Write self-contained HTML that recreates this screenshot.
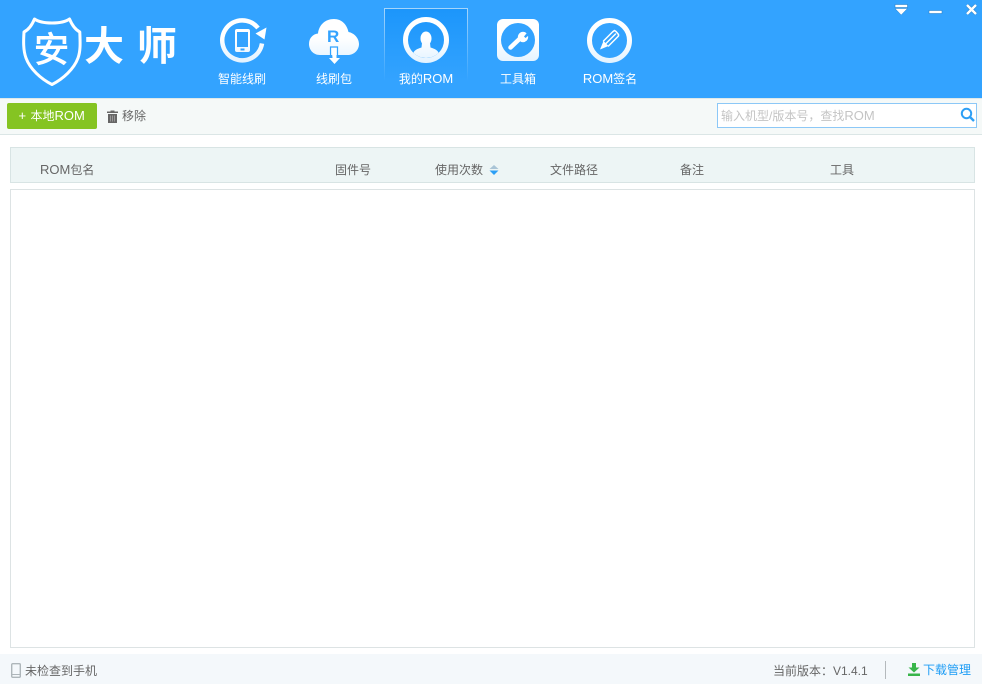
<!DOCTYPE html>
<html lang="zh">
<head>
<meta charset="utf-8">
<title>ROM</title>
<style>
html,body{margin:0;padding:0;width:982px;height:684px;overflow:hidden;background:#fff;font-family:"Liberation Sans","Noto Sans CJK SC",sans-serif;font-size:12px;color:#666}
.abs,.t{position:absolute}
.t{white-space:nowrap;line-height:16px}
.l{font-size:13px}
.hdr{position:absolute;left:0;top:0;width:982px;height:98px;background:#33a3ff}
.tb{position:absolute;left:0;top:98px;width:982px;height:35px;background:#f5f9f8;border-top:1px solid #dfe9ea;border-bottom:1px solid #dbe6e6}
.nav{color:#fff;width:84px;text-align:center;top:71px}
.active{position:absolute;left:384px;top:8px;width:84px;height:72px;box-sizing:border-box;background:linear-gradient(#1c96fb,#33a3ff);border-top:1px solid #a5d5fb}
.active:before,.active:after{content:"";position:absolute;top:0;width:1px;height:72px;background:linear-gradient(#a5d5fb,#33a3ff)}
.active:before{left:0}.active:after{right:0}
.btn{position:absolute;left:7px;top:103px;width:90px;height:26px;background:#85c422;border-radius:2px}
.search{position:absolute;left:717px;top:103px;width:260px;height:25px;box-sizing:border-box;background:#fff;border:1px solid #8cc8f7;color:#c4c4c4;line-height:23px;padding-left:3px}
.th{position:absolute;left:10px;top:147px;width:965px;height:36px;box-sizing:border-box;background:#edf5f5;border:1px solid #d8e4e4}
.list{position:absolute;left:10px;top:189px;width:965px;height:459px;box-sizing:border-box;background:#fff;border:1px solid #dde3e4}
.st{position:absolute;left:0;top:654px;width:982px;height:30px;background:#f4f8fb}
.h{top:162px;color:#666}
</style>
</head>
<body>
<div class="hdr"></div>
<div class="active"></div>

<svg class="abs" style="left:0;top:0" width="982" height="98" viewBox="0 0 982 98">
<defs>
<linearGradient id="gu" gradientUnits="userSpaceOnUse" x1="0" y1="18" x2="0" y2="62"><stop offset="0.45" stop-color="#fff"/><stop offset="1" stop-color="#e4f3ff"/></linearGradient>
<clipPath id="c1"><circle cx="426" cy="40" r="18"/></clipPath>
</defs>
<!-- shield -->
<path d="M34.500 19 C38 21.500 44 23 52 23 C60 23 66 21.500 69.500 19 C72 25 76 30 79.800 32 C80 40 81 50 78 58 C74 69 63 79 52 84.500 C41 79 30 69 26 58 C23 50 23.500 40 24 32 C28 30 32 25 34.500 19 Z" fill="none" stroke="#fff" stroke-width="3" stroke-linejoin="round"/>
<text x="34" y="62" font-family="'Noto Sans CJK SC',sans-serif" font-size="35" fill="#fff" stroke="#fff" stroke-width="0.900">安</text>
<text x="84" y="60" font-family="'Noto Sans CJK SC',sans-serif" font-size="40" fill="#fff" font-weight="700">大</text>
<text x="137" y="60" font-family="'Noto Sans CJK SC',sans-serif" font-size="40" fill="#fff" font-weight="700">师</text>

<!-- refresh phone -->
<path d="M262 43.500 A20 20 0 1 1 258 28" fill="none" stroke="url(#gu)" stroke-width="4.500"/>
<path d="M266.500 27.500 L264.500 39.500 L255.500 33.500 Z" fill="#fff"/>
<rect x="235" y="29" width="15" height="23" rx="2" fill="url(#gu)"/>
<rect x="237" y="32" width="11" height="15" fill="#33a3ff"/>
<rect x="240.500" y="48.500" width="4" height="2" fill="#33a3ff"/>

<!-- cloud -->
<path d="M320 55 C313 55 309 49.500 309 44 C309 38 313 34 318 33.500 C319 25 325 19 334 19 C342 19 347 25 348.500 32 C354 33 359 38 359 44 C359 50 354 55 348 55 Z" fill="url(#gu)"/>
<text x="327" y="42" font-family="'Liberation Sans',sans-serif" font-size="17" font-weight="700" fill="#33a3ff">R</text>
<path d="M331.500 48 h5 v10 h3.500 l-5.500 6 l-5.500 -6 h3.500 Z" fill="#fff"/>
<path d="M330.500 55 v-8 h7 v8" fill="none" stroke="#33a3ff" stroke-width="1.200"/>

<!-- person -->
<circle cx="426" cy="40" r="20.500" fill="none" stroke="url(#gu)" stroke-width="5"/>
<g clip-path="url(#c1)" fill="url(#gu)">
<ellipse cx="426" cy="38.500" rx="5.500" ry="7"/>
<path d="M422 43 L430 43 L430.500 47.500 C435 49 438 50 439 54 L441 60 L411 60 L413 54 C414 50 417 49 421.500 47.500 Z"/>
</g>

<!-- toolbox -->
<rect x="497" y="19" width="42" height="42" rx="6" fill="url(#gu)"/>
<circle cx="518" cy="40" r="17" fill="#33a3ff"/>
<path d="M510.500 47.500 L520 38.500" stroke="#fff" stroke-width="4.500" stroke-linecap="round"/>
<circle cx="523" cy="37" r="5.200" fill="#fff"/>
<path d="M524 36.500 L528.500 31 L531 33.500 L525.500 38 Z" fill="#33a3ff"/>

<!-- pencil -->
<circle cx="609.500" cy="40.500" r="20" fill="none" stroke="url(#gu)" stroke-width="5"/>
<path d="M600 49.500 L603.500 41 L608.500 46 Z" fill="#fff"/>
<path d="M603.500 41 L612.500 32 M606 43.500 L615.500 34 M608.500 46 L618.500 36" stroke="#fff" stroke-width="1.500" stroke-linecap="round"/>
<path d="M612.500 32 L614.500 30.500 L616 31.500 L618.500 34.500 L618.500 36" fill="none" stroke="#fff" stroke-width="1.500" stroke-linejoin="round"/>

<!-- window controls -->
<rect x="895" y="4.500" width="12.500" height="3" fill="#fff" stroke="#2a83cc" stroke-width="0.600"/>
<path d="M895 8.500 H907.500 L901.200 15 Z" fill="#fff" stroke="#2a83cc" stroke-width="0.500"/>
<rect x="929" y="10.500" width="13" height="3" fill="#fff" stroke="#2a83cc" stroke-width="0.600"/>
<path d="M967 5 L976 14 M976 5 L967 14" stroke="#2a83cc" stroke-width="3.600"/>
<path d="M967 5 L976 14 M976 5 L967 14" stroke="#fff" stroke-width="2.500"/>
</svg>

<div class="t nav" style="left:200px">智能线刷</div>
<div class="t nav" style="left:292px">线刷包</div>
<div class="t nav" style="left:384px">我的<span class="l">ROM</span></div>
<div class="t nav" style="left:476px">工具箱</div>
<div class="t nav" style="left:568px"><span class="l">ROM</span>签名</div>

<div class="tb"></div>
<div class="btn"></div>
<div class="t" style="left:18.500px;top:108px;color:#fff;font-size:13px">+</div>
<div class="t" style="left:30.500px;top:108px;color:#fff">本地<span class="l">ROM</span></div>
<svg class="abs" style="left:107px;top:110px" width="11" height="13" viewBox="0 0 11 13">
<path d="M3.500 1.500 V0.500 H7.500 V1.500 H11 V3 H0 V1.500 Z" fill="#666"/>
<rect x="1" y="4" width="9" height="9" fill="#666"/>
<path d="M3.500 5.500 V11.500 M5.500 5.500 V11.500 M7.500 5.500 V11.500" stroke="#a5a5a5" stroke-width="0.800"/>
</svg>
<div class="t" style="left:122px;top:108px;color:#666">移除</div>

<div class="search">输入机型/版本号，查找<span class="l">ROM</span></div>
<svg class="abs" style="left:960px;top:107px" width="15" height="15" viewBox="0 0 15 15">
<circle cx="6.500" cy="6.500" r="4.700" fill="none" stroke="#2d9ff5" stroke-width="2"/>
<path d="M10 10 L14 14" stroke="#2d9ff5" stroke-width="2.400"/>
</svg>

<div class="th"></div>
<div class="t h" style="left:40px"><span class="l">ROM</span>包名</div>
<div class="t h" style="left:335px">固件号</div>
<div class="t h" style="left:435px">使用次数</div>
<svg class="abs" style="left:489px;top:165px" width="10" height="10" viewBox="0 0 10 10">
<path d="M5 0 L9.500 4 H0.500 Z" fill="#a9c4d6"/>
<path d="M5 10 L9.500 5.500 H0.500 Z" fill="#2d9ff5"/>
</svg>
<div class="t h" style="left:550px">文件路径</div>
<div class="t h" style="left:680px">备注</div>
<div class="t h" style="left:830px">工具</div>

<div class="list"></div>
<div class="st"></div>

<svg class="abs" style="left:11px;top:663px" width="10" height="15" viewBox="0 0 10 15">
<rect x="0.700" y="0.700" width="8.600" height="13.600" rx="1" fill="none" stroke="#aeb6ba" stroke-width="1.400"/>
<path d="M1 11.500 H9" stroke="#aeb6ba"/>
</svg>
<div class="t" style="left:25px;top:663px;color:#666">未检查到手机</div>
<div class="t" style="left:773px;top:663px;color:#666">当前版本：V1.4.1</div>
<div class="abs" style="left:885px;top:661px;width:1px;height:18px;background:#b4b9bc"></div>
<svg class="abs" style="left:908px;top:663px" width="12" height="13" viewBox="0 0 12 13">
<path d="M4 0 H8 V4.500 H11.500 L6 9.500 L0.500 4.500 H4 Z" fill="#38b54a"/>
<rect x="0" y="10.500" width="12" height="2.500" fill="#38b54a"/>
</svg>
<div class="t" style="left:923px;top:662px;color:#1e9df5">下载管理</div>
</body>
</html>
